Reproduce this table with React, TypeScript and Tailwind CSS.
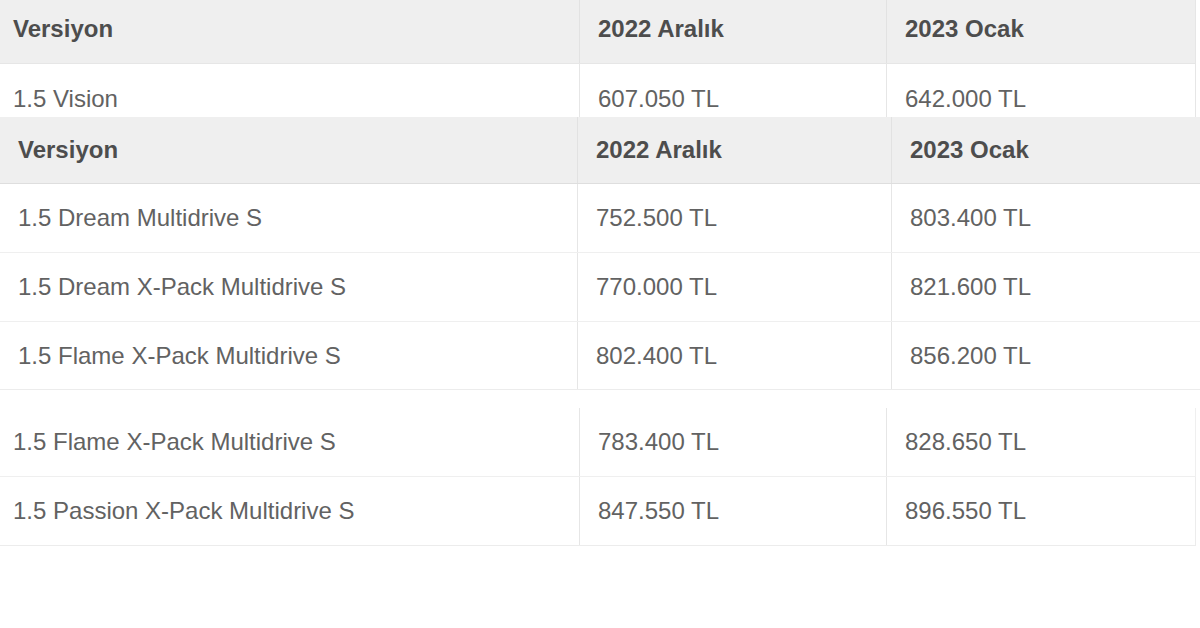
type Row = [string, string, string];

function HeaderRow({ cols, h, pad, shift = '' }: { cols: string; h: string; pad: string; shift?: string }) {
  return (
    <div className={`grid ${cols} ${h} bg-[#efefef] border-b border-[#dedede] font-bold text-[#4d4d4d]`}>
      <div className={`flex items-center ${pad} ${shift}`}>Versiyon</div>
      <div className={`flex items-center border-l border-[#e2e2e2] pl-[18px] ${shift}`}>2022 Aralık</div>
      <div className={`flex items-center border-l border-[#e2e2e2] pl-[18px] ${shift}`}>2023 Ocak</div>
    </div>
  );
}

function BodyRow({ row, cols, h, pad, last }: { row: Row; cols: string; h: string; pad: string; last?: boolean }) {
  return (
    <div className={`grid ${cols} ${h} ${last ? 'border-b border-[#ececec]' : 'border-b border-[#efefef]'} text-[#626262]`}>
      <div className={`flex items-center ${pad}`}>{row[0]}</div>
      <div className="flex items-center border-l border-[#e6e6e6] pl-[18px]">{row[1]}</div>
      <div className="flex items-center border-l border-[#e6e6e6] pl-[18px]">{row[2]}</div>
    </div>
  );
}

export default function App() {
  const colsA = 'grid-cols-[579px_307px_309px] w-[1196px] border-r border-[#e6e6e6]';
  const colsB = 'grid-cols-[577px_314px_309px] w-[1200px]';

  const second: Row[] = [
    ['1.5 Dream Multidrive S', '752.500 TL', '803.400 TL'],
    ['1.5 Dream X-Pack Multidrive S', '770.000 TL', '821.600 TL'],
    ['1.5 Flame X-Pack Multidrive S', '802.400 TL', '856.200 TL'],
  ];
  const third: Row[] = [
    ['1.5 Flame X-Pack Multidrive S', '783.400 TL', '828.650 TL'],
    ['1.5 Passion X-Pack Multidrive S', '847.550 TL', '896.550 TL'],
  ];

  return (
    <div className="w-[1200px] h-[628px] overflow-hidden bg-white text-[24px] leading-[28px] font-['Liberation_Sans',Arial,sans-serif]">
      {/* first table, cut off by the second */}
      <div className="h-[117px] overflow-hidden">
        <HeaderRow cols={colsA} h="h-[64px]" pad="pl-[13px]" shift="pb-[5px]" />
        <div className={`grid ${colsA} h-[53px] text-[#626262]`}>
          <div className="flex items-end pl-[13px] pb-[4px]">1.5 Vision</div>
          <div className="flex items-end border-l border-[#e6e6e6] pl-[18px] pb-[4px]">607.050 TL</div>
          <div className="flex items-end border-l border-[#e6e6e6] pl-[18px] pb-[4px]">642.000 TL</div>
        </div>
      </div>

      {/* second table */}
      <div>
        <HeaderRow cols={colsB} h="h-[67px]" pad="pl-[18px]" />
        {second.map((r, i) => (
          <BodyRow key={r[0]} row={r} cols={colsB} h={i === 2 ? 'h-[68px]' : 'h-[69px]'} pad="pl-[18px]" last={i === 2} />
        ))}
      </div>

      {/* third table */}
      <div className="mt-[18px]">
        {third.map((r, i) => (
          <BodyRow key={r[0]} row={r} cols={colsA} h="h-[69px]" pad="pl-[13px]" last={i === 1} />
        ))}
      </div>
    </div>
  );
}
